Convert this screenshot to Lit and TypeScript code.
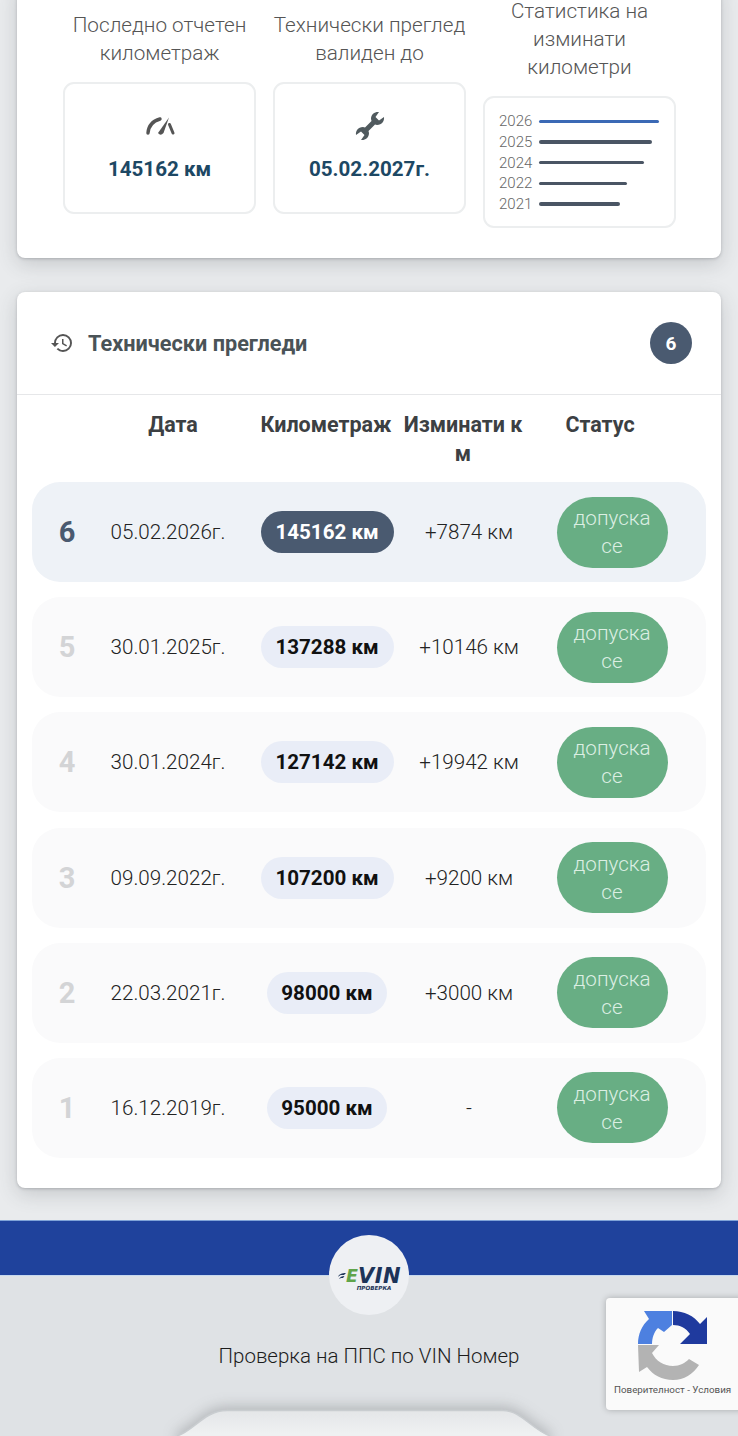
import { LitElement, html, css } from "lit";
import { customElement } from "lit/decorators.js";

const bars = [
  { y: "2026", w: 120, hi: true },
  { y: "2025", w: 113, hi: false },
  { y: "2024", w: 105, hi: false },
  { y: "2022", w: 88, hi: false },
  { y: "2021", w: 81, hi: false },
];

const rows = [
  { n: 6, d: "05.02.2026г.", km: "145162 км", delta: "+7874 км", wide: true },
  { n: 5, d: "30.01.2025г.", km: "137288 км", delta: "+10146 км", wide: true },
  { n: 4, d: "30.01.2024г.", km: "127142 км", delta: "+19942 км", wide: true },
  { n: 3, d: "09.09.2022г.", km: "107200 км", delta: "+9200 км", wide: true },
  { n: 2, d: "22.03.2021г.", km: "98000 км", delta: "+3000 км", wide: false },
  { n: 1, d: "16.12.2019г.", km: "95000 км", delta: "-", wide: false },
];

@customElement("app-root")
export class AppRoot extends LitElement {
  static styles = css`
    :host {
      display: block;
      height: 1436px;
      overflow: hidden;
      position: relative;
      background: #e9ebed;
      font-family: Roboto, "Noto Sans", sans-serif;
      color: #222;
    }
    .page { margin-top: -17px; display: flex; flex-direction: column; }
    .card {
      margin: 0 17px;
      background: #fff;
      border-radius: 8px;
      box-shadow: 0 1px 3px rgba(60, 64, 70, 0.25), 0 6px 20px rgba(60, 64, 70, 0.2);
    }
    .top {
      padding: 14px 46px 30px;
      display: grid;
      grid-template-columns: repeat(3, 193px);
      column-gap: 17px;
      align-items: center;
    }
    .col { display: flex; flex-direction: column; }
    .col-title {
      text-align: center;
      font-size: 20.7px;
      font-weight: 300;
      line-height: 28px;
      color: #555;
      margin-bottom: 15px;
      white-space: pre-line;
    }
    .box {
      height: 132px;
      box-sizing: border-box;
      border: 2px solid #eceeef;
      border-radius: 11px;
      display: flex;
      flex-direction: column;
      align-items: center;
      background: #fff;
    }
    .icon-slot { height: 28px; margin-top: 28px; display: flex; align-items: center; justify-content: center; }
    .value {
      margin-top: 17px;
      font-size: 20.6px;
      font-weight: 700;
      line-height: 24px;
      color: #1d4864;
    }
    .chart { padding: 13px 14px 0 14px; justify-content: flex-start; align-items: stretch; }
    .bar-row { display: flex; align-items: center; height: 20.7px; }
    .bar-label { width: 40px; font-size: 15px; font-weight: 300; color: #666; }
    .bar { height: 3.5px; border-radius: 2px; background: #4a5564; }
    .bar.hi { background: #3b69b5; }

    .hist { margin-top: 34px; padding-bottom: 30px; }
    .hist-head {
      height: 103px;
      box-sizing: border-box;
      border-bottom: 1.5px solid #e6e7e9;
      padding: 0 29px 0 33px;
      display: flex;
      align-items: center;
    }
    .hist-head svg { margin-right: 14px; }
    .hist-title { flex: 1; font-size: 21.7px; font-weight: 700; color: #4a5357; }
    .count {
      width: 42px;
      height: 42px;
      border-radius: 50%;
      background: #4a5a70;
      color: #fff;
      font-weight: 700;
      font-size: 19px;
      display: flex;
      align-items: center;
      justify-content: center;
    }
    .thead {
      display: grid;
      grid-template-columns: 60px 158px 148px 126px 148px;
      margin: 0 17px;
      height: 87px;
      box-sizing: border-box;
      padding-top: 15px;
      font-size: 21.5px;
      font-weight: 700;
      line-height: 29px;
      color: #3c4043;
      text-align: center;
    }
    .rows { display: flex; flex-direction: column; gap: 15.2px; padding: 0 15px; }
    .row {
      height: 100px;
      border-radius: 28px;
      background: #fafafb;
      display: grid;
      grid-template-columns: 70px 132px 186px 98px 1fr;
      align-items: center;
      text-align: center;
      font-size: 20.6px;
      font-weight: 300;
      color: #222;
    }
    .row.current { background: #eef2f7; }
    .num { font-size: 29px; font-weight: 700; color: #d3d4d6; }
    .current .num { color: #4a5a70; }
    .delta { white-space: nowrap; justify-self: center; }
    .pill {
      justify-self: center;
      height: 42px;
      border-radius: 21px;
      background: #e9edf7;
      color: #111;
      font-weight: 700;
      font-size: 20.6px;
      display: flex;
      align-items: center;
      justify-content: center;
      width: 120px;
    }
    .pill.wide { width: 133px; }
    .current .pill { background: #4a5a70; color: #fff; }
    .status {
      justify-self: center;
      width: 111px;
      height: 71px;
      border-radius: 36px;
      background: #68ae84;
      color: #dcefe3;
      line-height: 28px;
      font-size: 20.6px;
      font-weight: 300;
      display: flex;
      align-items: center;
      justify-content: center;
      text-align: center;
    }

    .footer { margin-top: 32px; position: relative; background: #dfe2e5; height: 300px; display: flex; flex-direction: column; align-items: center; }
    .band {
      align-self: stretch;
      height: 56px;
      box-sizing: border-box;
      background: #1f429c;
      border-top: 1px solid #7fa3d8;
      border-bottom: 1.5px solid #c6d8ee;
    }
    .logo {
      position: absolute;
      left: 329px;
      top: 15px;
      width: 80px;
      height: 80px;
      border-radius: 50%;
      background: #eef0f3;
      box-sizing: border-box;
      padding-top: 10px;
      display: flex;
      flex-direction: column;
      align-items: center;
      justify-content: center;
      font-family: "DejaVu Sans", sans-serif;
      font-style: italic;
      font-weight: 700;
    }
    .logo-main { display: flex; align-items: center; height: 16px; line-height: 16px; margin-left: 1px; }
    .logo-main .e { color: #5fa44a; font-size: 17.5px; }
    .logo-main .v { color: #1c3358; font-size: 21px; letter-spacing: 0.4px; }
    .logo-sub { font-size: 5.6px; height: 7px; line-height: 7px; margin-top: 1px; color: #1c3358; margin-left: 10px; }
    .foot-text { margin-top: 67px; line-height: 26px; font-size: 20.5px; font-weight: 300; color: #1c1c1c; }
    .notch { margin-top: 40px; display: block; filter: drop-shadow(0 -3px 7px rgba(60, 64, 70, 0.28)); }

    .recaptcha {
      position: absolute;
      left: 606px;
      top: 1298px;
      width: 140px;
      height: 112px;
      background: #fafafa;
      border-radius: 4px;
      box-shadow: 0 0 6px rgba(0, 0, 0, 0.25);
      font-family: Roboto, sans-serif;
    }
    .recaptcha svg { position: absolute; left: 32px; top: 12px; }
    .recaptcha span { position: absolute; left: 8px; top: 86px; font-size: 9.8px; line-height: 12px; color: #555; white-space: nowrap; }
  `;

  gauge() {
    return html`<svg width="30" height="20" viewBox="0 0 30 20">
      <path d="M3 17 C3.5 10 8 5 15 3" fill="none" stroke="#555" stroke-width="3.4" stroke-linecap="round"/>
      <path d="M24 1.5 L18.5 17 Q15.5 20.5 13 17 Z" fill="#555"/>
      <path d="M24.5 8.5 L28 17" fill="none" stroke="#555" stroke-width="3" stroke-linecap="round"/>
    </svg>`;
  }

  wrench() {
    return html`<svg width="30" height="30" viewBox="0 0 30 30">
      <path d="M24 1 C20 .5 16 3 16 8 L16.5 10 L10 16.5 L8 16 C3 16 .5 20 1 24 L6 20.5 L9.5 24 L6 29 C10 29.5 14 27 14 22 L13.5 20 L20 13.5 L22 14 C27 14 29.5 10 29 6 L24 9.5 L20.5 6 Z" fill="#505a5e"/>
    </svg>`;
  }

  render() {
    return html`
      <div class="page">
        <section class="card top">
          <div class="col">
            <div class="col-title">Последно отчетен
километраж</div>
            <div class="box"><div class="icon-slot">${this.gauge()}</div><div class="value">145162 км</div></div>
          </div>
          <div class="col">
            <div class="col-title">Технически преглед
валиден до</div>
            <div class="box"><div class="icon-slot">${this.wrench()}</div><div class="value">05.02.2027г.</div></div>
          </div>
          <div class="col">
            <div class="col-title">Статистика на
изминати
километри</div>
            <div class="box chart">
              ${bars.map(
                (b) => html`<div class="bar-row">
                  <span class="bar-label">${b.y}</span>
                  <span class="bar ${b.hi ? "hi" : ""}" style="width:${b.w}px"></span>
                </div>`
              )}
            </div>
          </div>
        </section>

        <section class="card hist">
          <header class="hist-head">
            <svg width="24" height="24" viewBox="0 0 24 24" fill="#555"><path d="M13 3a9 9 0 0 0-9 9H1l3.89 3.89.07.14L9 12H6c0-3.87 3.13-7 7-7s7 3.13 7 7-3.13 7-7 7c-1.93 0-3.68-.79-4.94-2.06l-1.42 1.42A8.954 8.954 0 0 0 13 21a9 9 0 0 0 0-18zm-1 5v5l4.28 2.54.72-1.21-3.5-2.08V8H12z"/></svg>
            <span class="hist-title">Технически прегледи</span>
            <span class="count">6</span>
          </header>
          <div class="thead">
            <span></span><span>Дата</span><span>Километраж</span><span>Изминати к<br />м</span><span>Статус</span>
          </div>
          <div class="rows">
            ${rows.map(
              (r, i) => html`<div class="row ${i === 0 ? "current" : ""}">
                <span class="num">${r.n}</span>
                <span>${r.d}</span>
                <span class="pill ${r.wide ? "wide" : ""}">${r.km}</span>
                <span class="delta">${r.delta}</span>
                <span class="status">допуска<br />се</span>
              </div>`
            )}
          </div>
        </section>

        <footer class="footer">
          <div class="band"></div>
          <div class="logo">
            <div class="logo-main">
              <svg width="8" height="8" viewBox="0 0 8 8"><path d="M0 5 C1 2 4 1 8 1 L6 3 H3 C2 3 1 4 0 5 Z M1 7 C2 5 4 4 6.5 4 L5 6 H3 Z" fill="#1c3358"/></svg>
              <span class="e">E</span><span class="v">VIN</span>
            </div>
            <div class="logo-sub">ПРОВЕРКА</div>
          </div>
          <div class="foot-text">Проверка на ППС по VIN Номер</div>
          <svg class="notch" width="400" height="40" viewBox="0 0 400 40">
            <defs>
              <linearGradient id="ng" x1="0" y1="0" x2="0" y2="1">
                <stop offset="0" stop-color="#e4e6e8"/>
                <stop offset="0.6" stop-color="#eff1f2"/>
              </linearGradient>
            </defs>
            <path d="M8 27 C25 22 35 1.5 58 1.5 H334 C352 1.5 362 20 381 27 V40 H8 Z" fill="url(#ng)"/>
            <path d="M8 27 C25 22 35 1.5 58 1.5 H334 C352 1.5 362 20 381 27" fill="none" stroke="#c9cdd0" stroke-width="1.5"/>
          </svg>
        </footer>
      </div>
      <div class="recaptcha">
        <svg width="70" height="70" viewBox="0 0 70 70">
          <path d="M0 34 C0 24 4 15 11 9 L6 1 H34 V15 L26 22 L20 18 C16 22 14 28 14 34 Z" fill="#4d80e0"/>
          <path d="M35 1 C46 1 56 6 62 14 L69 7 V34 H42 L52 24 C48 18 42 15 35 15 Z" fill="#1f3a9e"/>
          <path d="M0 35 H21 L14 43 C18 51 26 56 35 56 C42 56 47 53 51 49 L61 55 C55 64 46 70 35 70 C24 70 15 65 9 57 L1 62 Z" fill="#b3b3b3"/>
        </svg>
        <span>Поверителност - Условия</span>
      </div>
    `;
  }
}
